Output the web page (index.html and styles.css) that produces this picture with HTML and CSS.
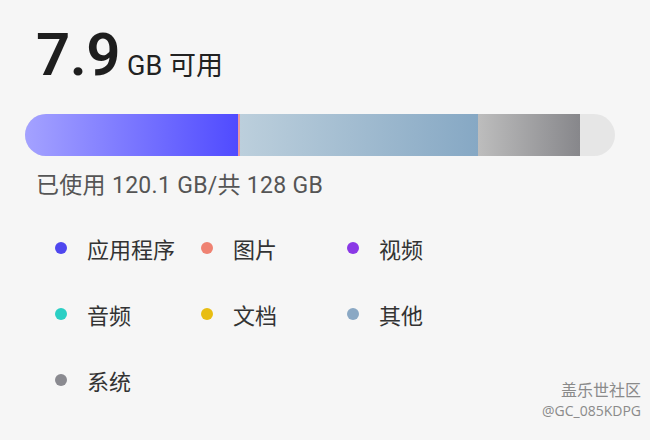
FILE: index.html
```html
<!DOCTYPE html>
<html lang="zh-CN">
<head>
    <meta charset="UTF-8">
    <meta name="viewport" content="width=device-width, initial-scale=1.0">
    <title>存储空间</title>
    <link rel="stylesheet" href="styles.css">
</head>
<body>
    <div class="storage">
        <div class="free">
            <span class="free-num">7.9</span>
            <span class="free-unit">GB 可用</span>
        </div>

        <div class="bar">
            <div class="seg seg-apps" style="width: 213px"></div>
            <div class="seg seg-pics" style="width: 2px"></div>
            <div class="seg seg-other" style="width: 238px"></div>
            <div class="seg seg-system" style="width: 102px"></div>
        </div>

        <p class="used">已使用 120.1 GB/共 128 GB</p>

        <ul class="legend">
            <li><span class="dot dot-apps"></span>应用程序</li>
            <li><span class="dot dot-pics"></span>图片</li>
            <li><span class="dot dot-video"></span>视频</li>
            <li><span class="dot dot-audio"></span>音频</li>
            <li><span class="dot dot-docs"></span>文档</li>
            <li><span class="dot dot-other"></span>其他</li>
            <li><span class="dot dot-system"></span>系统</li>
        </ul>
    </div>

    <div class="watermark">
        <div class="wm-title">盖乐世社区</div>
        <div class="wm-user">@GC_085KDPG</div>
    </div>
</body>
</html>
```

FILE: styles.css
```css
body {
    margin: 0;
    width: 650px;
    height: 440px;
    background: #f6f6f6;
    font-family: Roboto, "Noto Sans CJK SC", sans-serif;
    color: #222;
    overflow: hidden;
    position: relative;
}

.storage { padding: 19px 35px 0 25px; }

.free { display: flex; align-items: baseline; padding-left: 11px; height: 66px; }
.free-num { font-size: 60px; font-weight: 600; letter-spacing: -0.5px; color: #1e1e1e; }
.free-unit { font-size: 27px; margin-left: 7px; color: #222; }

.bar {
    margin-top: 29px;
    height: 42px;
    border-radius: 21px;
    background: #e6e6e6;
    display: flex;
    overflow: hidden;
}
.seg { height: 100%; }
.seg-apps { background: linear-gradient(to right, #a4a2ff, #504bff); }
.seg-pics { background: #e89aa0; }
.seg-other { background: linear-gradient(to right, #bccfdc, #86a8c4); }
.seg-system { background: linear-gradient(to right, #bdbdbd, #87878b); }

.used {
    margin: 16px 0 0 11px;
    font-size: 23px;
    line-height: 28px;
    letter-spacing: 0.3px;
    color: #555;
}

.legend {
    list-style: none;
    margin: 33px 0 0 30px;
    padding: 0;
    display: grid;
    grid-template-columns: repeat(3, 146px);
    row-gap: 36px;
}
.legend li {
    display: flex;
    align-items: center;
    height: 30px;
    font-size: 22px;
    color: #333;
}
.dot { width: 12px; height: 12px; border-radius: 50%; margin-right: 20px; flex: none; }
.dot-apps { background: #4f47ef; }
.dot-pics { background: #ef8272; }
.dot-video { background: #8a38e6; }
.dot-audio { background: #2bcfc4; }
.dot-docs { background: #e8bd12; }
.dot-other { background: #8aa8c4; }
.dot-system { background: #8a8a90; }

.watermark {
    position: absolute;
    right: 9px;
    bottom: 20px;
    text-align: right;
    color: #8a8a8a;
}
.wm-title { font-size: 16px; line-height: 22px; }
.wm-user { font-size: 14px; line-height: 18px; font-family: "Open Sans", sans-serif; }
```
